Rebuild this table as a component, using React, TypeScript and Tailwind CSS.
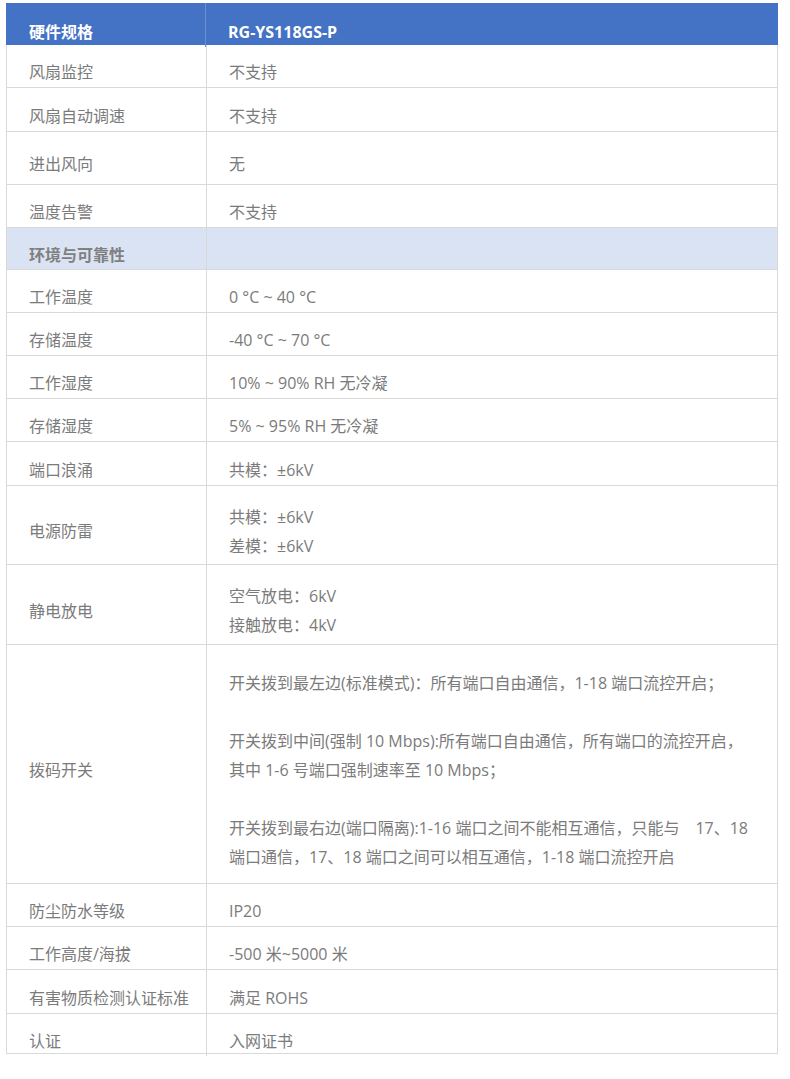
import React from 'react';

type Row = {
  label: string;
  lines: string[];
  h: string;
  section?: boolean;
};

const rows: Row[] = [
  { label: '风扇监控', lines: ['不支持'], h: 'h-[43px]' },
  { label: '风扇自动调速', lines: ['不支持'], h: 'h-[44px]' },
  { label: '进出风向', lines: ['无'], h: 'h-[53px]' },
  { label: '温度告警', lines: ['不支持'], h: 'h-[43px]' },
  { label: '环境与可靠性', lines: [], h: 'h-[42px]', section: true },
  { label: '工作温度', lines: ['0 °C ~ 40 °C'], h: 'h-[43px]' },
  { label: '存储温度', lines: ['-40 °C ~ 70 °C'], h: 'h-[43px]' },
  { label: '工作湿度', lines: ['10% ~ 90% RH 无冷凝'], h: 'h-[43px]' },
  { label: '存储湿度', lines: ['5% ~ 95% RH 无冷凝'], h: 'h-[43px]' },
  { label: '端口浪涌', lines: ['共模：±6kV'], h: 'h-[44px]' },
  { label: '电源防雷', lines: ['共模：±6kV', '差模：±6kV'], h: 'h-[79px]' },
  { label: '静电放电', lines: ['空气放电：6kV', '接触放电：4kV'], h: 'h-[80px]' },
  {
    label: '拨码开关',
    lines: [
      '开关拨到最左边(标准模式)：所有端口自由通信，1-18 端口流控开启；',
      '',
      '开关拨到中间(强制 10 Mbps):所有端口自由通信，所有端口的流控开启，',
      '其中 1-6 号端口强制速率至 10 Mbps；',
      '',
      '开关拨到最右边(端口隔离):1-16 端口之间不能相互通信，只能与　17、18',
      '端口通信，17、18 端口之间可以相互通信，1-18 端口流控开启',
    ],
    h: 'h-[239px]',
  },
  { label: '防尘防水等级', lines: ['IP20'], h: 'h-[43px]' },
  { label: '工作高度/海拔', lines: ['-500 米~5000 米'], h: 'h-[43px]' },
  { label: '有害物质检测认证标准', lines: ['满足 ROHS'], h: 'h-[44px]' },
  { label: '认证', lines: ['入网证书'], h: 'h-[40px]' },
];

export default function App() {
  return (
    <div
      className="w-[790px] h-[1079px] bg-white pt-[3px] pl-[6px]"
      style={{ fontFamily: '"Open Sans", "Noto Sans CJK SC", sans-serif' }}
    >
      <div className="w-[772px] border-x border-[#d9d9d9] text-[16px] leading-[29px] text-[#7b7b7b]">
        {/* Header */}
        <div className="grid grid-cols-[200px_1fr] h-[42px] bg-[#4472c4] text-white font-bold -mx-px">
          <div className="flex items-center pt-[15px] pl-[23px] border-r border-[#6d8fcf]">硬件规格</div>
          <div className="flex items-center pt-[15px] pl-[22px]">RG-YS118GS-P</div>
        </div>

        {rows.map((r) => (
          <div
            key={r.label}
            className={`grid grid-cols-[200px_1fr] border-b border-[#d9d9d9] ${r.h} ${
              r.section ? 'bg-[#dae3f3] font-bold text-[#808080]' : ''
            }`}
          >
            <div className="flex items-center pt-[13px] pl-[22px] border-r border-[#d9d9d9] whitespace-nowrap">
              {r.label}
            </div>
            <div className="flex flex-col justify-center pt-[13px] pl-[22px]">
              {r.lines.map((l, i) => (
                <div key={i} className="h-[29px] whitespace-nowrap">
                  {l}
                </div>
              ))}
            </div>
          </div>
        ))}
      </div>
    </div>
  );
}
